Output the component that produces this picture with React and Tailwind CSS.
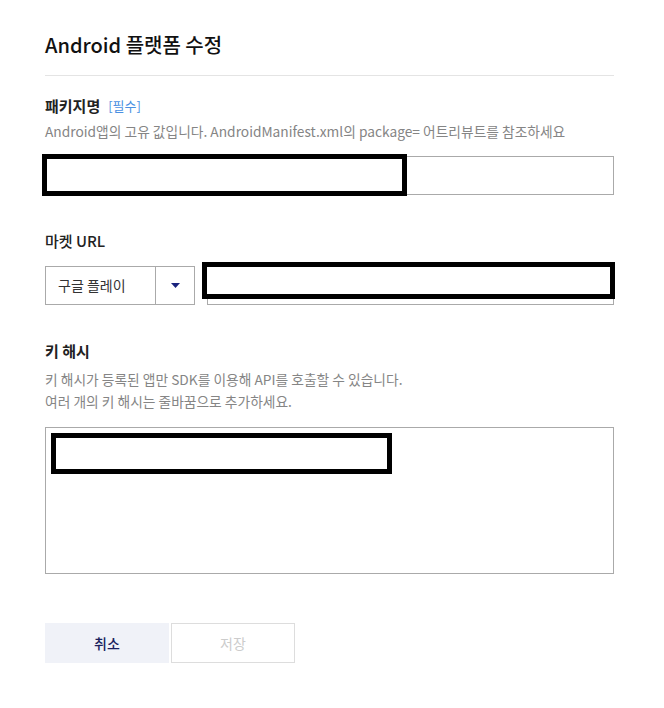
import React from "react";

export default function App() {
  return (
    <div
      className="w-[664px] h-[708px] bg-white pl-[45px] pr-[50px]"
      style={{ fontFamily: '"Noto Sans CJK KR", "Noto Sans", sans-serif' }}
    >
      <div className="pt-[31px] pb-[16px] border-b border-[#e4e4e4]">
        <h1 className="text-[20px] leading-[28px] font-medium text-[#111]">Android 플랫폼 수정</h1>
      </div>

      <div className="mt-[19px]">
        <div className="flex items-center h-[22px]">
          <span className="text-[15px] font-bold text-[#222]">패키지명</span>
          <span className="ml-[8px] text-[13px] text-[#4a90e2]">[필수]</span>
        </div>
        <p className="mt-[4px] text-[13.75px] leading-[20px] text-[#858585]">
          Android앱의 고유 값입니다. AndroidManifest.xml의 package= 어트리뷰트를 참조하세요
        </p>
        <div className="relative mt-[15px] h-[39px] border border-[#aaa]">
          <div className="absolute left-[-4px] top-[-3px] w-[365px] h-[42px] border-[5px] border-black bg-white" />
        </div>
      </div>

      <div className="mt-[35px]">
        <div className="h-[22px] flex items-center text-[15px] font-medium text-[#222]">마켓 URL</div>
        <div className="mt-[14px] flex gap-[12px]">
          <div className="flex w-[150px] h-[39px] border border-[#aaa]">
            <div className="flex-1 flex items-center pl-[12px] text-[14px] text-[#333] border-r border-[#aaa]">
              구글 플레이
            </div>
            <div className="w-[38px] flex items-center justify-center">
              <svg width="9" height="6" viewBox="0 0 9 6">
                <polygon points="0,0 9,0 4.5,5" fill="#1a237e" />
              </svg>
            </div>
          </div>
          <div className="relative flex-1 h-[39px] border border-[#aaa]">
            <div className="absolute left-[-6px] top-[-5px] w-[413px] h-[37px] border-[5px] border-black bg-white" />
          </div>
        </div>
      </div>

      <div className="mt-[35px]">
        <div className="h-[22px] flex items-center text-[15px] font-bold text-[#222]">키 해시</div>
        <p className="mt-[6px] text-[13.75px] leading-[22px] text-[#858585]">
          키 해시가 등록된 앱만 SDK를 이용해 API를 호출할 수 있습니다.
          <br />
          여러 개의 키 해시는 줄바꿈으로 추가하세요.
        </p>
        <div className="relative mt-[15px] h-[147px] border border-[#aaa]">
          <div className="absolute left-[5px] top-[5px] w-[341px] h-[41px] border-[5px] border-black bg-white" />
        </div>
      </div>

      <div className="mt-[49px] flex gap-[2px]">
        <button className="w-[124px] h-[40px] bg-[#f0f2f8] text-[14px] font-medium text-[#1b1f5e]">취소</button>
        <button className="w-[124px] h-[40px] border border-[#dddddd] bg-white text-[14px] text-[#cccccc]">저장</button>
      </div>
    </div>
  );
}
